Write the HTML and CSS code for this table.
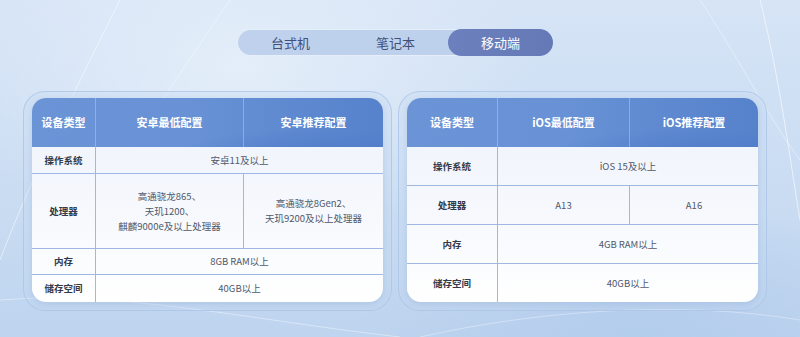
FILE: index.html
```html
<!DOCTYPE html>
<html lang="zh">
<head>
<meta charset="utf-8">
<link rel="stylesheet" href="styles.css">
</head>
<body>
<div class="page">
  <svg class="bg-lines" width="800" height="337" viewBox="0 0 800 337">
    <path d="M120 0 C 80 80, 30 180, 0 260" stroke="rgba(255,255,255,0.5)" fill="none" stroke-width="1"/>
    <path d="M230 0 C 170 90, 120 150, 100 240" stroke="rgba(255,255,255,0.35)" fill="none" stroke-width="1"/>
    <path d="M760 0 C 780 80, 790 160, 800 220" stroke="rgba(255,255,255,0.6)" fill="none" stroke-width="1"/>
    <path d="M700 0 C 740 60, 770 120, 800 160" stroke="rgba(255,255,255,0.4)" fill="none" stroke-width="1"/>
    <path d="M0 300 C 120 290, 250 320, 400 337" stroke="rgba(255,255,255,0.4)" fill="none" stroke-width="1"/>
    <path d="M420 337 C 540 310, 680 300, 800 320" stroke="rgba(255,255,255,0.35)" fill="none" stroke-width="1"/>
  </svg>
  <div class="tabs">
    <div class="tab">台式机</div>
    <div class="tab">笔记本</div>
    <div class="tab active">移动端</div>
  </div>
  <div class="cards">
    <div class="frame">
      <div class="table t-android">
        <div class="row head">
          <div class="cell c1">设备类型</div>
          <div class="cell c2">安卓最低配置</div>
          <div class="cell c3">安卓推荐配置</div>
        </div>
        <div class="row r-os">
          <div class="cell c1 label">操作系统</div>
          <div class="cell span">安卓11及以上</div>
        </div>
        <div class="row r-cpu">
          <div class="cell c1 label">处理器</div>
          <div class="cell c2">高通骁龙865、<br>天玑1200、<br>麒麟9000e及以上处理器</div>
          <div class="cell c3">高通骁龙8Gen2、<br>天玑9200及以上处理器</div>
        </div>
        <div class="row r-ram">
          <div class="cell c1 label">内存</div>
          <div class="cell span">8GB RAM以上</div>
        </div>
        <div class="row r-rom last">
          <div class="cell c1 label">储存空间</div>
          <div class="cell span">40GB以上</div>
        </div>
      </div>
    </div>
    <div class="frame">
      <div class="table t-ios">
        <div class="row head">
          <div class="cell c1">设备类型</div>
          <div class="cell c2">iOS最低配置</div>
          <div class="cell c3">iOS推荐配置</div>
        </div>
        <div class="row">
          <div class="cell c1 label">操作系统</div>
          <div class="cell span">iOS 15及以上</div>
        </div>
        <div class="row">
          <div class="cell c1 label">处理器</div>
          <div class="cell c2">A13</div>
          <div class="cell c3">A16</div>
        </div>
        <div class="row">
          <div class="cell c1 label">内存</div>
          <div class="cell span">4GB RAM以上</div>
        </div>
        <div class="row last">
          <div class="cell c1 label">储存空间</div>
          <div class="cell span">40GB以上</div>
        </div>
      </div>
    </div>
  </div>
</div>
</body>
</html>
```
FILE: styles.css
```css
* { box-sizing: border-box; margin: 0; padding: 0; }
html, body { width: 800px; height: 337px; overflow: hidden; }
body {
  font-family: "Noto Sans CJK SC", "Noto Sans", sans-serif;
  background: #cadcf2;
}
.page {
  position: relative;
  width: 800px;
  height: 337px;
  background:
    radial-gradient(ellipse 420px 260px at 30% 20%, rgba(230,239,250,0.9), rgba(230,239,250,0) 70%),
    radial-gradient(ellipse 400px 200px at 80% 100%, rgba(178,204,236,0.9), rgba(178,204,236,0) 70%),
    linear-gradient(180deg, #d6e4f6 0%, #c9dcf2 60%, #bed4ef 100%);
  display: flex;
  flex-direction: column;
  align-items: center;
  padding-top: 29px;
}
.bg-lines { position: absolute; left: 0; top: 0; pointer-events: none; }
.tabs {
  position: relative;
  display: flex;
  width: 316px;
  height: 27px;
  border-radius: 14px;
  background: rgba(184, 204, 234, 0.85);
  border: 1px solid rgba(235, 242, 252, 0.9);
  margin-left: -10px;
}
.tab {
  flex: 1;
  display: flex;
  align-items: center;
  justify-content: center;
  font-size: 13px;
  color: #40507a;
  border-radius: 14px;
}
.tab.active {
  background: linear-gradient(90deg, #6b80bd, #6479b6);
  color: #fff;
  margin: -1px -1px -1px 0;
}
.cards {
  position: relative;
  display: flex;
  gap: 6px;
  margin-top: 35px;
  margin-left: -10px;
}
.frame {
  width: 369px;
  height: 220px;
  border-radius: 22px;
  border: 1px solid rgba(170, 196, 230, 0.8);
  background: rgba(198, 217, 241, 0.3);
  padding: 6px 8px;
  display: flex;
  justify-content: center;
}
.table {
  width: 353px;
  height: 204px;
  border-radius: 14px;
  overflow: hidden;
  display: flex;
  flex-direction: column;
  background: linear-gradient(180deg, #edf2fb 0%, #f7f9fd 60%, #ffffff 100%);
  box-shadow: 0 2px 6px rgba(120, 150, 200, 0.25);
}
.row {
  display: flex;
  border-bottom: 1px solid #9fb8e1;
}
.row.last { border-bottom: none; flex: 1; }
.cell {
  display: flex;
  align-items: center;
  justify-content: center;
  text-align: center;
  font-size: 9.5px;
  line-height: 15px;
  color: #50586a;
}
.c1 { border-right: 1px solid #9fb8e1; }
.c2 { border-right: 1px solid #9fb8e1; }
.label { font-weight: 700; color: #333a4a; }
.span { flex: 1; }
.head {
  height: 49px;
  border-bottom: none;
  background:
    radial-gradient(ellipse 200px 40px at 80% 120%, rgba(70,112,196,0.55), rgba(70,112,196,0) 70%),
    linear-gradient(90deg, #6a94d6 0%, #6892d5 45%, #5682cc 100%);
}
.head .cell {
  color: #fff;
  font-weight: 700;
  font-size: 11px;
  border-right: 1px solid rgba(180, 205, 240, 0.5);
}
.head .c3 { border-right: none; }
.t-android .c1 { width: 64px; }
.t-android .c2 { width: 148px; }
.t-android .c3 { flex: 1; }
.t-android .r-os { height: 27px; }
.t-android .r-cpu { height: 75px; }
.t-android .r-ram { height: 26px; }
.t-ios .c1 { width: 91px; }
.t-ios .c2 { width: 132px; }
.t-ios .c3 { flex: 1; }
.t-ios .row:not(.head) { height: 39px; }
.t-ios .row.last { height: auto; }
```
